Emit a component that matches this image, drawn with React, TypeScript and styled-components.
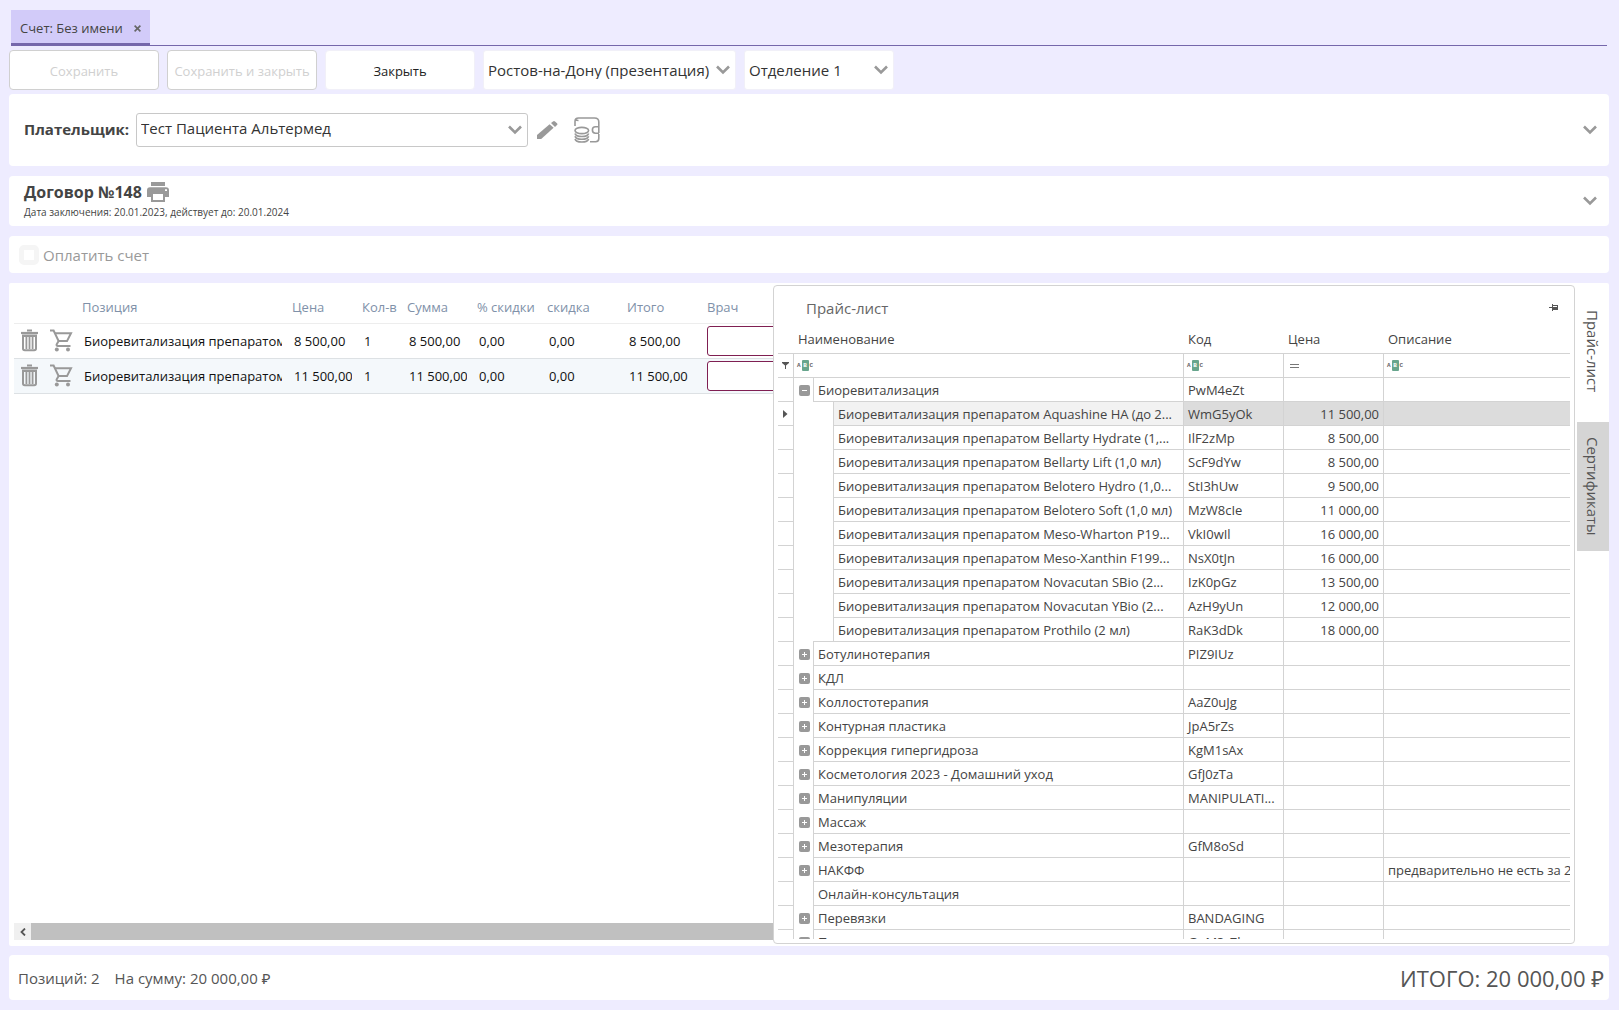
import React, { useState } from "react";
import styled, { createGlobalStyle } from "styled-components";

const GlobalStyle = createGlobalStyle`
  *, *::before, *::after { box-sizing: border-box; }
  body {
    margin: 0;
    background: #eeecff;
    color: #444;
    font: 13px/18px "Open Sans", "Noto Sans", sans-serif;
  }
  button, input, select { font: inherit; color: inherit; }
  button { padding: 0; border: 0; background: none; cursor: pointer; }
`;

const Page = styled.div`
  display: flex;
  flex-direction: column;
  height: 100vh;
  padding: 10px 10px 10px 9px;
`;

const TabStrip = styled.nav`
  display: flex;
  margin: 0 2px 4px;
  border-bottom: 1px solid #7567ab;
`;

const DocumentTab = styled.div`
  display: flex;
  align-items: center;
  gap: 11px;
  height: 35px;
  padding: 3px 9px 0;
  background: #d2cbf9;
  border-bottom: 2px solid #7567ab;
`;

const TabClose = styled.button`
  display: flex;
  color: #666;
`;

const Toolbar = styled.div`
  display: flex;
  align-items: center;
  gap: 8px;
  height: 40px;
  margin-bottom: 4px;
`;

const ToolButton = styled.button`
  width: 150px;
  height: 40px;
  padding-top: 2px;
  background: #fff;
  color: #222;
  border: 1px solid #f1f0f8;
  border-radius: 4px;
  white-space: nowrap;
  &:disabled {
    color: #d0d0d0;
    border-color: #d0d0d0;
    cursor: default;
  }
`;

const SelectBox = styled.div<{ $width: number; $height: number; $line: string }>`
  display: grid;
  grid-template-columns: minmax(0, 1fr) 24px;
  align-items: center;
  width: ${(p) => p.$width}px;
  height: ${(p) => p.$height}px;
  background: #fff;
  border: 1px solid ${(p) => p.$line};
  border-radius: 3px;
  svg {
    grid-area: 1 / 2;
    justify-self: center;
    pointer-events: none;
  }
`;

const Select = styled.select`
  grid-area: 1 / 1 / 2 / 3;
  width: 100%;
  height: 100%;
  padding: 0 0 0 4px;
  border: 0;
  background: transparent;
  appearance: none;
  color: #333;
  font-size: 15px;
`;

const PayerSelect = styled(Select)`
  padding-bottom: 4px;
`;

const Card = styled.section<{ $height: number }>`
  display: flex;
  align-items: center;
  flex: none;
  height: ${(p) => p.$height}px;
  margin-bottom: 10px;
  padding: 0 12px 0 15px;
  background: #fff;
  border-radius: 4px;
`;

const PayerLabel = styled.label`
  margin-right: 7px;
  padding-bottom: 2px;
  font-size: 15px;
  font-weight: 700;
`;

const IconButton = styled.button<{ $space?: number }>`
  display: flex;
  margin-left: ${(p) => p.$space ?? 0}px;
`;

const Expand = styled(IconButton)`
  margin-left: auto;
`;

const ContractTitle = styled.h2`
  display: flex;
  align-items: center;
  gap: 5px;
  margin: 0;
  font-size: 16px;
  line-height: 22px;
`;

const ContractDates = styled.p`
  margin: 0;
  font-size: 10px;
  line-height: 18px;
`;

const PayLabel = styled.label`
  display: flex;
  align-items: center;
  gap: 4px;
  margin-left: -5px;
  color: #999;
  font-size: 15px;
`;

const PayCheck = styled.input`
  width: 20px;
  height: 20px;
  margin: 0;
  appearance: none;
  background: #fff;
  border: 5px solid #f5f5f5;
  border-radius: 5px;
`;

const Workspace = styled.main`
  display: grid;
  grid-template-columns: minmax(0, 764fr) minmax(0, 804fr) 32px;
  grid-template-rows: minmax(0, 1fr);
  flex: 1;
  min-height: 0;
  margin-bottom: 9px;
  background: #fff;
  border-radius: 2px;
`;

const Positions = styled.section`
  display: flex;
  flex-direction: column;
  min-width: 0;
  padding: 8px 0 6px 5px;
  overflow: hidden;
`;

const PositionsView = styled.div`
  flex: 1;
  min-height: 0;
  overflow: hidden;
`;

const PositionsTable = styled.table`
  width: 960px;
  table-layout: fixed;
  border-collapse: collapse;
  th {
    height: 32px;
    padding: 0 2px;
    color: #8091a9;
    font-weight: 400;
    text-align: left;
    white-space: nowrap;
    border-bottom: 1px solid #ededed;
  }
  td {
    height: 35px;
    padding: 0 8px 0 4px;
    color: #111;
    border-bottom: 1px solid #dde1e4;
  }
  td:first-child { padding-left: 7px; }
  td:last-child { padding: 0 2px; }
`;

const PositionRow = styled.tr<{ $tinted: boolean }>`
  background: ${(p) => (p.$tinted ? "#f4f8fb" : "#fff")};
`;

const Clip = styled.div`
  overflow: hidden;
  white-space: nowrap;
`;

const DoctorInput = styled.input`
  display: block;
  width: 100%;
  height: 30px;
  background: #fff;
  border: 1px solid #7f1f52;
  border-radius: 3px;
`;

const ScrollBar = styled.div`
  display: flex;
  flex: none;
  height: 17px;
`;

const ScrollArrow = styled.button`
  display: flex;
  align-items: center;
  justify-content: center;
  width: 17px;
  background: #f0f0f0;
`;

const ScrollThumb = styled.div`
  flex: 1;
  background: #c0c0c0;
`;

const PricePanel = styled.section`
  display: flex;
  flex-direction: column;
  min-width: 0;
  margin: 2px 2px 2px 0;
  padding: 0 4px 4px;
  border: 1px solid #d3d3d3;
  border-radius: 4px;
  background: #fff;
`;

const PriceHeader = styled.header`
  display: flex;
  align-items: center;
  justify-content: space-between;
  flex: none;
  height: 43px;
  padding: 0 11px 0 28px;
`;

const PriceTitle = styled.h2`
  margin: 0;
  color: #666;
  font-size: 15px;
  font-weight: 400;
`;

const PriceView = styled.div`
  flex: 1;
  min-height: 0;
  overflow: hidden;
`;

const PriceTable = styled.table`
  width: 100%;
  table-layout: fixed;
  border-collapse: separate;
  border-spacing: 0;
  th {
    height: 25px;
    padding: 0 4px 4px;
    font-weight: 400;
    text-align: left;
    border-bottom: 1px solid #d3d3d3;
  }
  td {
    height: 24px;
    padding: 0 4px;
    overflow: hidden;
    white-space: nowrap;
    text-overflow: ellipsis;
    border-bottom: 1px solid #d3d3d3;
    border-right: 1px solid #d3d3d3;
  }
  td:last-child {
    border-right: 0;
    text-overflow: clip;
  }
`;

const Indicator = styled.td`
  &&& { padding: 0 0 0 4px; }
  svg { display: block; }
`;

const PriceRow = styled.tr<{ $selected: boolean }>`
  td:nth-child(n + 3) { background: ${(p) => (p.$selected ? "#dcdcdc" : "transparent")}; }
`;

const NameCell = styled.td`
  &&& {
    padding: 0;
    border-bottom: 0;
  }
`;

const NameLine = styled.div`
  display: flex;
  height: 24px;
`;

const ExpanderBox = styled.span`
  display: flex;
  align-items: center;
  justify-content: center;
  flex: none;
  width: 19px;
  padding-left: 2px;
`;

const Indent = styled.span<{ $last: boolean }>`
  flex: none;
  width: 20px;
  border-bottom: 1px solid ${(p) => (p.$last ? "#d3d3d3" : "transparent")};
`;

const Name = styled.span<{ $selected?: boolean }>`
  flex: 1;
  min-width: 0;
  padding: 0 4px;
  overflow: hidden;
  text-overflow: ellipsis;
  line-height: 24px;
  border-left: 1px solid #d3d3d3;
  border-bottom: 1px solid #d3d3d3;
  background: ${(p) => (p.$selected ? "#f2f2f2" : "#fff")};
`;

const ExpanderButton = styled.button`
  display: flex;
`;

const PriceCell = styled.td`
  text-align: right;
`;

const FilterCell = styled.td`
  &&& { padding: 0 3px; }
`;

const FilterButton = styled.button`
  display: flex;
  align-items: center;
  gap: 1px;
  height: 11px;
  color: #666;
  font: 700 6px/11px "Liberation Mono", monospace;
  b {
    width: 7px;
    height: 11px;
    background: #67a58d;
    border-radius: 1px;
    color: #fff;
    text-align: center;
  }
`;

const SideTabs = styled.nav`
  display: flex;
  flex-direction: column;
  gap: 15px;
  padding-top: 12px;
`;

const SideTab = styled.button<{ $active: boolean }>`
  width: 32px;
  padding: 15px 0;
  background: ${(p) => (p.$active ? "#d5d5d5" : "transparent")};
  color: #555;
  font-size: 15px;
  line-height: 32px;
  writing-mode: vertical-rl;
`;

const Footer = styled.footer`
  display: flex;
  align-items: center;
  flex: none;
  gap: 15px;
  height: 45px;
  padding: 0 5px 0 9px;
  background: #fff;
  border-radius: 4px;
  color: #555;
  font-size: 15px;
`;

const GrandTotal = styled.strong`
  margin-left: auto;
  font-size: 22px;
  font-weight: 400;
  line-height: 30px;
`;

const Chevron = () => (
  <svg width="14" height="10" viewBox="0 0 14 10" fill="none" stroke="#999" strokeWidth="2.6">
    <path d="M1 1.5 7 7.5l6-6" />
  </svg>
);

const CloseIcon = () => (
  <svg width="7" height="7" viewBox="0 0 7 7" fill="none" stroke="currentColor" strokeWidth="1.6">
    <path d="m.6.6 5.8 5.8M6.4.6.6 6.4" />
  </svg>
);

const PencilIcon = () => (
  <svg width="21" height="19" viewBox="0 0 21 19" fill="#999">
    <path d="M0 18v-4L12.600 3.200l4 3.600L4.200 18Z" />
    <path d="m14 2 2-1.500q1-.8 2 0l2 1.800q.9.9 0 1.800L18 6Z" />
  </svg>
);

const WalletIcon = () => (
  <svg width="26" height="26" viewBox="0 0 26 26" fill="none" stroke="#999" strokeWidth="1.6">
    <path d="M1 9V4.500q0-3.500 3.500-3.500h16Q24.800 1 24.800 5v4M1.500 2.600q1 .9 3 .9" />
    <path d="M25 9.800h-3.500q-3.100 0-3.100 3.200t3.100 3.200H25M24.800 9v7M24.800 17v4.500q0 3.200-3.200 3.200H16" />
    <ellipse cx="7.800" cy="13.500" rx="6.800" ry="3.100" />
    <path d="M1 16.500c1 4 12.600 4 13.600 0M1 19.300c1 4 12.600 4 13.600 0M1 22c1 4 12.600 4 13.600 0" />
  </svg>
);

const PrinterIcon = () => (
  <svg width="22" height="20" viewBox="0 0 22 20" fill="#999">
    <path d="M4 0h14v4H4Z" />
    <path fillRule="evenodd" d="M3 5.300h16q3 0 3 3V15h-4v5H4v-5H0V8.300q0-3 3-3ZM6 12v6h10v-6Zm12-4.800v1.900h2V7.200Z" />
  </svg>
);

const TrashIcon = () => (
  <svg width="18" height="23" viewBox="0 0 18 23" fill="none" stroke="#999">
    <path strokeWidth="2" d="M6 1.500h5" />
    <path strokeWidth="2.200" d="M0 4h17" />
    <path strokeWidth="2" d="M2 6.500v13q0 1.800 1.800 1.800h9.400q1.800 0 1.800-1.800v-13ZM2 7h13" />
    <path strokeWidth="1.800" d="M5.400 7v13M8.500 7v13M11.600 7v13" />
  </svg>
);

const CartIcon = () => (
  <svg width="23" height="23" viewBox="0 0 23 23" fill="none" stroke="#999" strokeWidth="2">
    <path d="M0 1.600h3.600l5 10.400-2 3.600q-.2 1.400 1.200 1.400h12.700" />
    <path d="M5 4.200h16l-4 7.900H8.600" />
    <circle cx="6.800" cy="20.500" r="2" fill="#999" stroke="none" />
    <circle cx="18" cy="20.500" r="2" fill="#999" stroke="none" />
  </svg>
);

const PinIcon = () => (
  <svg width="10" height="9" viewBox="0 0 10 9" fill="#555">
    <path fillRule="evenodd" d="M0 4h3V1h1v1h5v5H4v1H3V5H0Zm4-1v1h4V3Z" />
  </svg>
);

const FunnelIcon = () => (
  <svg width="7" height="7" viewBox="0 0 7 7" fill="#555">
    <path d="M0 0h7v1L4 3.500V7H3V3.500L0 1Z" />
  </svg>
);

const PointerIcon = () => (
  <svg width="6" height="8" viewBox="0 0 6 8" fill="#555">
    <path d="M1 0 5.500 4 1 8Z" />
  </svg>
);

const EqualsIcon = () => (
  <svg width="13" height="9" viewBox="0 0 13 9" fill="#777">
    <path d="M3 3h9v1H3zM3 6h9v1H3z" />
  </svg>
);

const ArrowLeftIcon = () => (
  <svg width="7" height="8" viewBox="0 0 7 8" fill="none" stroke="#555" strokeWidth="1.800">
    <path d="M6 .500 2.500 4 6 7.500" />
  </svg>
);

const Expander = ({ open, name }: { open: boolean; name: string }) => (
  <ExpanderButton type="button" aria-expanded={open} aria-label={name}>
    <svg width="11" height="11" viewBox="0 0 11 11">
      <rect width="11" height="11" rx="2" fill="#999" />
      <path d={open ? "M3 5h5v1H3z" : "M3 5h5v1H3zM5 3h1v5H5z"} fill="#fff" />
    </svg>
  </ExpanderButton>
);

const TextFilter = ({ label }: { label: string }) => (
  <FilterButton type="button" aria-label={label}>
    A<b>B</b>C
  </FilterButton>
);

const positions = [
  { name: "Биоревитализация препаратом", price: "8 500,00", total: "8 500,00" },
  { name: "Биоревитализация препаратом", price: "11 500,00", total: "11 500,00" },
];

type PriceItem = {
  name: string;
  code?: string;
  price?: string;
  note?: string;
  kind: "open" | "closed" | "plain" | "child";
};

const child = (tail: string, code: string, price: string): PriceItem => ({
  name: `Биоревитализация препаратом ${tail}`,
  code,
  price,
  kind: "child",
});

const group = (name: string, code = "", note = ""): PriceItem => ({ name, code, note, kind: "closed" });

const priceItems: PriceItem[] = [
  { name: "Биоревитализация", code: "PwM4eZt", kind: "open" },
  child("Aquashine HA (до 2...", "WmG5yOk", "11 500,00"),
  child("Bellarty Hydrate (1,...", "IlF2zMp", "8 500,00"),
  child("Bellarty Lift (1,0 мл)", "ScF9dYw", "8 500,00"),
  child("Belotero Hydro (1,0...", "StI3hUw", "9 500,00"),
  child("Belotero Soft (1,0 мл)", "MzW8cIe", "11 000,00"),
  child("Meso-Wharton P19...", "VkI0wIl", "16 000,00"),
  child("Meso-Xanthin F199...", "NsX0tJn", "16 000,00"),
  child("Novacutan SBio (2...", "IzK0pGz", "13 500,00"),
  child("Novacutan YBio (2...", "AzH9yUn", "12 000,00"),
  child("Prothilo (2 мл)", "RaK3dDk", "18 000,00"),
  group("Ботулинотерапия", "PIZ9IUz"),
  group("КДЛ"),
  group("Коллостотерапия", "AaZ0uJg"),
  group("Контурная пластика", "JpA5rZs"),
  group("Коррекция гипергидроза", "KgM1sAx"),
  group("Косметология 2023 - Домашний уход", "GfJ0zTa"),
  group("Манипуляции", "MANIPULATI..."),
  group("Массаж"),
  group("Мезотерапия", "GfM8oSd"),
  group("НАКФФ", "", "предварительно не есть за 2"),
  { name: "Онлайн-консультация", kind: "plain" },
  group("Перевязки", "BANDAGING"),
  group("Пилинги", "GuM3rZh"),
];

export default function App() {
  const [selected, setSelected] = useState(1);
  return (
    <>
      <GlobalStyle />
      <Page>
        <TabStrip>
          <DocumentTab>
            <span>Счет: Без имени</span>
            <TabClose type="button" aria-label="Закрыть вкладку"><CloseIcon /></TabClose>
          </DocumentTab>
        </TabStrip>

        <Toolbar>
          <ToolButton type="button" disabled>Сохранить</ToolButton>
          <ToolButton type="button" disabled>Сохранить и закрыть</ToolButton>
          <ToolButton type="button">Закрыть</ToolButton>
          <SelectBox $width={253} $height={40} $line="#f1f0f8">
            <Select aria-label="Филиал"><option>Ростов-на-Дону (презентация)</option></Select>
            <Chevron />
          </SelectBox>
          <SelectBox $width={150} $height={40} $line="#f1f0f8">
            <Select aria-label="Отделение"><option>Отделение 1</option></Select>
            <Chevron />
          </SelectBox>
        </Toolbar>

        <Card $height={72}>
          <PayerLabel htmlFor="payer">Плательщик:</PayerLabel>
          <SelectBox $width={392} $height={34} $line="#c8c8c8">
            <PayerSelect id="payer"><option>Тест Пациента Альтермед</option></PayerSelect>
            <Chevron />
          </SelectBox>
          <IconButton type="button" $space={9} aria-label="Изменить"><PencilIcon /></IconButton>
          <IconButton type="button" $space={16} aria-label="Баланс"><WalletIcon /></IconButton>
          <Expand type="button" aria-label="Развернуть"><Chevron /></Expand>
        </Card>

        <Card $height={50}>
          <div>
            <ContractTitle>
              Договор №148
              <IconButton type="button" aria-label="Печать"><PrinterIcon /></IconButton>
            </ContractTitle>
            <ContractDates>Дата заключения: 20.01.2023, действует до: 20.01.2024</ContractDates>
          </div>
          <Expand type="button" aria-label="Развернуть"><Chevron /></Expand>
        </Card>

        <Card $height={37}>
          <PayLabel>
            <PayCheck type="checkbox" disabled />
            Оплатить счет
          </PayLabel>
        </Card>

        <Workspace>
          <Positions>
            <PositionsView>
              <PositionsTable>
                <colgroup>
                  {[32, 34, 210, 70, 45, 70, 70, 80, 80].map((width, i) => <col key={i} width={width} />)}
                  <col />
                </colgroup>
                <thead>
                  <tr>
                    <th /><th />
                    <th>Позиция</th><th>Цена</th><th>Кол-в</th><th>Сумма</th>
                    <th>% скидки</th><th>скидка</th><th>Итого</th><th>Врач</th>
                  </tr>
                </thead>
                <tbody>
                  {positions.map((item, i) => (
                    <PositionRow key={i} $tinted={i % 2 === 1}>
                      <td><IconButton type="button" aria-label="Удалить"><TrashIcon /></IconButton></td>
                      <td><IconButton type="button" aria-label="В корзину"><CartIcon /></IconButton></td>
                      {[item.name, item.price, "1", item.total, "0,00", "0,00", item.total].map((text, n) => (
                        <td key={n}><Clip>{text}</Clip></td>
                      ))}
                      <td><DoctorInput aria-label="Врач" /></td>
                    </PositionRow>
                  ))}
                </tbody>
              </PositionsTable>
            </PositionsView>
            <ScrollBar>
              <ScrollArrow type="button" aria-label="Влево"><ArrowLeftIcon /></ScrollArrow>
              <ScrollThumb />
            </ScrollBar>
          </Positions>

          <PricePanel>
            <PriceHeader>
              <PriceTitle>Прайс-лист</PriceTitle>
              <IconButton type="button" aria-label="Закрепить"><PinIcon /></IconButton>
            </PriceHeader>
            <PriceView>
              <PriceTable>
                <colgroup>
                  <col width={16} />
                  <col width={390} />
                  <col width={100} />
                  <col width={100} />
                  <col />
                </colgroup>
                <thead>
                  <tr><th /><th>Наименование</th><th>Код</th><th>Цена</th><th>Описание</th></tr>
                </thead>
                <tbody>
                  <tr>
                    <Indicator><FunnelIcon /></Indicator>
                    <FilterCell><TextFilter label="Фильтр по наименованию" /></FilterCell>
                    <FilterCell><TextFilter label="Фильтр по коду" /></FilterCell>
                    <FilterCell>
                      <FilterButton type="button" aria-label="Фильтр по цене"><EqualsIcon /></FilterButton>
                    </FilterCell>
                    <FilterCell><TextFilter label="Фильтр по описанию" /></FilterCell>
                  </tr>
                  {priceItems.map((item, i) => (
                    <PriceRow key={item.name} $selected={i === selected} onClick={() => setSelected(i)}>
                      <Indicator>{i === selected && <PointerIcon />}</Indicator>
                      <NameCell>
                        <NameLine>
                          <ExpanderBox>
                            {(item.kind === "open" || item.kind === "closed") && (
                              <Expander open={item.kind === "open"} name={item.name} />
                            )}
                          </ExpanderBox>
                          {item.kind === "child" && <Indent $last={priceItems[i + 1]?.kind !== "child"} />}
                          <Name $selected={i === selected}>{item.name}</Name>
                        </NameLine>
                      </NameCell>
                      <td>{item.code}</td>
                      <PriceCell>{item.price}</PriceCell>
                      <td>{item.note}</td>
                    </PriceRow>
                  ))}
                </tbody>
              </PriceTable>
            </PriceView>
          </PricePanel>

          <SideTabs>
            <SideTab type="button" $active={false}>Прайс-лист</SideTab>
            <SideTab type="button" $active>Сертификаты</SideTab>
          </SideTabs>
        </Workspace>

        <Footer>
          <span>Позиций: 2</span>
          <span>На сумму: 20 000,00 ₽</span>
          <GrandTotal>ИТОГО: 20 000,00 ₽</GrandTotal>
        </Footer>
      </Page>
    </>
  );
}
